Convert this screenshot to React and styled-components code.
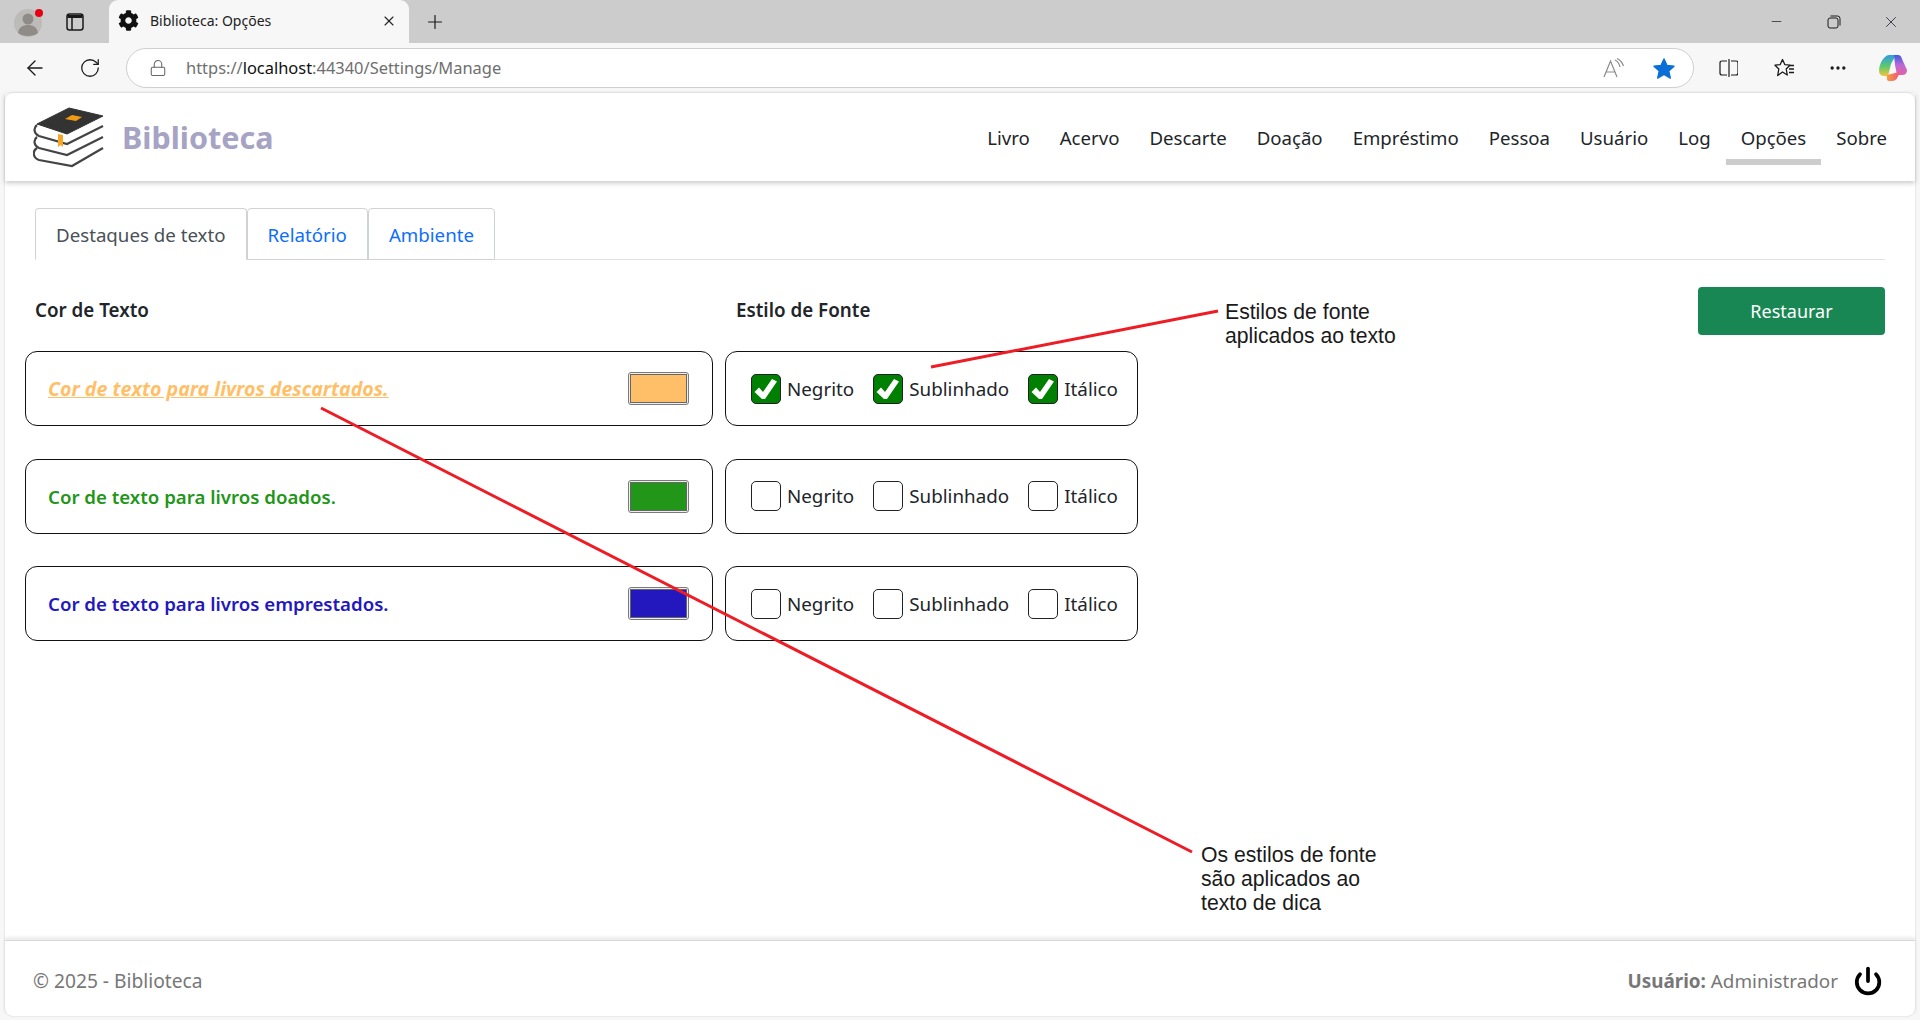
import React from 'react'
import styled, { createGlobalStyle } from 'styled-components'
import { FaCog } from 'react-icons/fa'
import { ArrowLeft, RotateCw, Lock, Plus, X, Minus, Power, MoreHorizontal } from 'lucide-react'

const Global = createGlobalStyle`
  html, body { margin: 0; padding: 0; height: 100%; background: #f7f7f7; }
  body { font-family: "Noto Sans", "Open Sans", sans-serif; color: #212529; overflow: hidden; }
  * { box-sizing: border-box; }
`

const Screen = styled.div`
  position: relative;
  width: 1920px;
  height: 1020px;
  display: flex;
  flex-direction: column;
  overflow: hidden;
`

/* browser chrome */
const TabStrip = styled.div`
  height: 43px;
  background: #cccccc;
  display: flex;
  align-items: flex-end;
  padding-left: 10px;
  flex-shrink: 0;
`
const StripIcon = styled.div`
  width: ${p => p.$w || 34}px;
  height: 43px;
  display: flex;
  align-items: center;
  justify-content: center;
  margin-left: ${p => p.$ml || 0}px;
  color: #1a1a1a;
  flex-shrink: 0;
`
const BrowserTab = styled.div`
  width: 300px;
  height: 43px;
  margin-left: 19px;
  background: #f7f7f7;
  border-radius: 9px 9px 0 0;
  display: flex;
  align-items: center;
  padding: 0 12px 2px 9px;
  font-size: 14px;
  color: #222;
  svg.gear { margin-right: 11px; }
  span { flex: 1; }
`
const WindowControls = styled.div`
  margin-left: auto;
  display: flex;
  padding-right: 1px;
`
const WinBtn = styled.div`
  width: 57px;
  height: 43px;
  display: flex;
  align-items: center;
  justify-content: center;
`
const Toolbar = styled.div`
  height: 50px;
  background: #f7f7f7;
  display: flex;
  align-items: center;
  padding-left: 7px;
  flex-shrink: 0;
`
const ToolBtn = styled.div`
  width: 55px;
  height: 40px;
  display: flex;
  align-items: center;
  justify-content: center;
  color: #1c1c1c;
  flex-shrink: 0;
`
const AddressBar = styled.div`
  flex: 1;
  height: 40px;
  margin: 0 6px 0 9px;
  background: #fff;
  border: 1px solid #cfcfcf;
  border-radius: 20px;
  display: flex;
  align-items: center;
  padding: 0 18px 0 22px;
  font-size: 16.45px;
  color: #6f6f6f;
`
const Url = styled.div`
  margin: 0 0 2px 19px;
  flex: 1;
  b { font-weight: 400; color: #111; }
`
const AddressGap = styled.span`
  width: 28px;
`

/* page */
const Page = styled.div`
  flex: 1;
  margin: 0 5px 4px;
  background: #fff;
  border-radius: 8px;
  display: flex;
  flex-direction: column;
  box-shadow: 0 0 2px rgba(0,0,0,.2);
  min-height: 0;
`
const Header = styled.header`
  height: 88px;
  display: flex;
  align-items: center;
  padding: 0 13px 0 28px;
  box-shadow: 0 2px 5px rgba(0,0,0,.22);
  flex-shrink: 0;
`
const Brand = styled.div`
  display: flex;
  align-items: center;
  gap: 14px;
  font-size: 30.5px;
  font-weight: 700;
  color: #a6a3c4;
`
const Nav = styled.nav`
  margin-left: auto;
  display: flex;
`
const NavItem = styled.a`
  padding: 16px 15px 8px;
  line-height: 26px;
  font-size: 18.62px;
  color: #212529;
  border-bottom: 6px solid ${p => (p.$active ? '#cccccc' : 'transparent')};
`
const Main = styled.main`
  flex: 1;
  padding: 27px 30px 0 20px;
  min-height: 0;
`
const Tabs = styled.div`
  display: flex;
  margin-left: 10px;
  height: 52px;
  border-bottom: 1px solid #dee2e6;
`
const Tab = styled.a`
  padding: 1px 20px 0;
  display: flex;
  align-items: center;
  font-size: 18.7px;
  height: 52px;
  color: ${p => (p.$active ? '#495057' : '#0d6efd')};
  border: 1px solid #d0d3d6;
  border-bottom: ${p => (p.$active ? '1px solid #fff' : '1px solid #d0d3d6')};
  border-radius: 4px 4px 0 0;
  background: #fff;
`
const TitleRow = styled.div`
  display: flex;
  align-items: center;
  height: 48px;
  margin-top: 27px;
`
const ColTitle = styled.div`
  font-size: 18.8px;
  font-weight: 600;
  padding: 0 0 2px 10px;
  width: ${p => p.$w}px;
  color: #212529;
`
const RestoreBtn = styled.button`
  margin-left: auto;
  width: 187px;
  height: 48px;
  border: 0;
  border-radius: 4px;
  background: #198754;
  color: #fff;
  font: inherit;
  font-size: 18px;
  padding-top: 1px;
`
const Rows = styled.div`
  display: flex;
  flex-direction: column;
  gap: 32.5px;
  margin-top: 16px;
`
const Row = styled.div`
  display: flex;
  gap: 12px;
`
const Card = styled.div`
  height: 75px;
  border: 1px solid #111;
  border-radius: 12px;
  display: flex;
  align-items: center;
`
const ColorCard = styled(Card)`
  width: 688px;
  padding: 0 23px 0 22px;
  justify-content: space-between;
`
const StyleCard = styled(Card)`
  width: 413px;
  padding: 0 19px 0 25px;
  justify-content: space-between;
`
const Sample = styled.div`
  font-size: ${p => (p.$styled ? 19.6 : 18.65)}px;
  font-weight: ${p => (p.$styled ? 700 : 600)};
  font-style: ${p => (p.$styled ? 'italic' : 'normal')};
  text-decoration: ${p => (p.$styled ? 'underline' : 'none')};
  color: ${p => p.$color};
`
const Swatch = styled.input`
  width: 61px;
  height: 33px;
  flex-shrink: 0;
  padding: 1px;
  border: 1px solid #7a7a7a;
  border-radius: 3px;
  background: #efefef;
  &::-webkit-color-swatch-wrapper { padding: 0; }
  &::-webkit-color-swatch { border: 1px solid #666; border-radius: 0; }
`
const Check = styled.label`
  display: flex;
  align-items: center;
  gap: 6px;
  font-size: 18.8px;
  color: #212529;
`
const Box = styled.span`
  width: 30px;
  height: 30px;
  border: 1px solid #222;
  border-radius: 5px;
  background: ${p => (p.$on ? '#008000' : '#fff')};
  display: flex;
  align-items: center;
  justify-content: center;
`
const Footer = styled.footer`
  height: 76px;
  border-top: 1px solid #d8d8d8;
  box-shadow: 0 -3px 3px rgba(0,0,0,.08);
  display: flex;
  align-items: center;
  justify-content: space-between;
  padding: 4px 32px 0 28px;
  font-size: 19.2px;
  color: #777;
  flex-shrink: 0;
`
const UserInfo = styled.div`
  display: flex;
  align-items: center;
  gap: 15px;
  font-size: 18.85px;
  b { font-weight: 700; }
  svg { color: #000; }
`

/* annotations lying over the page */
const Overlay = styled.svg`
  position: absolute;
  left: 0;
  top: 0;
  pointer-events: none;
`
const Note = styled.div`
  position: absolute;
  left: ${p => p.$x}px;
  top: ${p => p.$y}px;
  font-family: "Liberation Sans", Arial, sans-serif;
  font-size: 21.2px;
  line-height: 24px;
  color: #1a1a1a;
  white-space: pre-line;
`

const BookLogo = () => (
  <svg width="75" height="65" viewBox="13 10 75 65" fill="none">
    <path d="M17 29 L49 13 L83 21 L47 39 Z" fill="#333" stroke="#333" strokeLinejoin="round" />
    <path d="M17 30 C13 33 14 39 19 41 L47 49 L83 31" stroke="#444" strokeWidth="2.2" />
    <path d="M17 42 C13 45 14 51 19 53 L47 60 L83 42" stroke="#444" strokeWidth="2.2" />
    <path d="M17 53 C12 56 13 63 19 65 L52 71 L83 53" stroke="#444" strokeWidth="2.2" />
    <path d="M45 24 L52 20 L62 22 L56 26 Z" fill="#f39c12" />
    <path d="M38 39 L43 40 L43 52 L40.5 50 L38 52 Z" fill="#f5a623" />
  </svg>
)

const Avatar = () => (
  <svg width="34" height="34" viewBox="0 0 34 34">
    <circle cx="18" cy="18" r="14" fill="#bdbbb8" />
    <circle cx="18" cy="14" r="5.5" fill="#8f8c88" />
    <path d="M8 28 C9 22 13 20 18 20 C23 20 27 22 28 28 C24 32 12 32 8 28 Z" fill="#8f8c88" />
    <circle cx="29" cy="8" r="4" fill="#e60012" />
  </svg>
)

const TabsPanel = () => (
  <svg width="18" height="18" viewBox="0 0 18 18" fill="none" stroke="#1a1a1a" strokeWidth="1.5">
    <rect x="1" y="1" width="16" height="16" rx="2.5" />
    <path d="M1.5 3.5 H16.5" strokeWidth="3" />
    <path d="M6 3 V17" />
  </svg>
)

const Restore = () => (
  <svg width="14" height="14" viewBox="0 0 14 14" fill="none" stroke="#1a1a1a" strokeWidth="1">
    <rect x="1" y="3" width="10" height="10" rx="2" />
    <path d="M3.5 1 H10.5 Q13 1 13 3.5 V10.5" />
  </svg>
)

const ReadAloud = () => (
  <svg width="22" height="20" viewBox="0 0 22 20" fill="none" stroke="#8a8a8a" strokeWidth="1.2">
    <path d="M1 19 L7.5 3 L14 19 M3.5 14 H11.5" />
    <path d="M12 2 Q16 4 17 9 M14 0.5 Q19 3 20.5 8" />
  </svg>
)

const Star = () => (
  <svg width="22" height="21" viewBox="0 0 24 23">
    <path d="M12 1 L15.3 8.2 L23 9 L17.2 14.2 L18.9 22 L12 18 L5.1 22 L6.8 14.2 L1 9 L8.7 8.2 Z" fill="#0a6fd6" stroke="#0a6fd6" strokeWidth="1.5" strokeLinejoin="round" />
  </svg>
)

const SplitScreen = () => (
  <svg width="20" height="20" viewBox="-1 0 20 20" fill="none" stroke="#1a1a1a" strokeWidth="1.2">
    <path d="M8 3 H3 Q1 3 1 5 V15 Q1 17 3 17 H8 M12 3 H17 Q19 3 19 5 V15 Q19 17 17 17 H12 M10 1 V19" />
  </svg>
)

const Favorites = () => (
  <svg width="22" height="20" viewBox="-2 0 22 20" fill="none" stroke="#1a1a1a" strokeWidth="1.3">
    <path d="M8.5 1.5 L10.8 6.6 L16 7.2 L12.2 11 L13.3 17 L8.5 14 L3.7 17.5 L4.8 11 L1 7.2 L6.2 6.6 Z" strokeLinejoin="round" />
    <path d="M16 7.5 H21 M15 11 H21 M15 14.5 H21" />
  </svg>
)

const Copilot = () => (
  <svg width="30" height="30" viewBox="0 0 30 30">
    <defs>
      <linearGradient id="cpA" x1="0" y1="0" x2="0" y2="1">
        <stop offset="0" stopColor="#2f9be8" />
        <stop offset=".55" stopColor="#5fc96b" />
        <stop offset="1" stopColor="#f2c53d" />
      </linearGradient>
      <linearGradient id="cpB" x1="0" y1="0" x2="0" y2="1">
        <stop offset="0" stopColor="#3a5be0" />
        <stop offset=".5" stopColor="#b96ad8" />
        <stop offset="1" stopColor="#e85fa0" />
      </linearGradient>
      <linearGradient id="cpC" x1="0" y1="0" x2="1" y2="0">
        <stop offset="0" stopColor="#f7a13a" />
        <stop offset="1" stopColor="#f0567a" />
      </linearGradient>
    </defs>
    <path d="M11 2 H18 L13 11 L10 23 H6 Q1 23 1 17 Q2 8 7 4 Q9 2 11 2 Z" fill="url(#cpA)" />
    <path d="M16 2 H20 Q23 2 24 6 L29 17 Q29 22 24 22 H19 L17 12 Z" fill="url(#cpB)" />
    <path d="M9 22 L21 19 Q20 28 14 28 H11 Q8 28 9 22 Z" fill="url(#cpC)" />
  </svg>
)

const Tick = () => (
  <svg width="28" height="28" viewBox="1 1 28 28">
    <path d="M3.5 18 L8 13.5 L12 18 L21 5 L26 7.5 L14 25 L11 25 Z" fill="#fff" />
  </svg>
)

const navItems = ['Livro', 'Acervo', 'Descarte', 'Doação', 'Empréstimo', 'Pessoa', 'Usuário', 'Log', 'Opções', 'Sobre']

const rows = [
  { text: 'Cor de texto para livros descartados.', color: '#ffbf69', on: true },
  { text: 'Cor de texto para livros doados.', color: '#229619', on: false },
  { text: 'Cor de texto para livros emprestados.', color: '#2318be', on: false },
]

function App() {
  return (
    <Screen>
      <Global />
      <TabStrip>
        <StripIcon><Avatar /></StripIcon>
        <StripIcon $w={30} $ml={16}><TabsPanel /></StripIcon>
        <BrowserTab>
          <FaCog className="gear" size={21} color="#111" />
          <span>Biblioteca: Opções</span>
          <X size={16} strokeWidth={1.6} />
        </BrowserTab>
        <StripIcon $w={34} $ml={9}><Plus size={22} strokeWidth={1.3} /></StripIcon>
        <WindowControls>
          <WinBtn><Minus size={15} strokeWidth={1.2} /></WinBtn>
          <WinBtn><Restore /></WinBtn>
          <WinBtn><X size={18} strokeWidth={1.1} /></WinBtn>
        </WindowControls>
      </TabStrip>
      <Toolbar>
        <ToolBtn><ArrowLeft size={24} strokeWidth={1.4} /></ToolBtn>
        <ToolBtn><RotateCw size={22} strokeWidth={1.4} /></ToolBtn>
        <AddressBar>
          <Lock size={18} strokeWidth={1.4} color="#666" />
          <Url>https://<b>localhost</b>:44340/Settings/Manage</Url>
          <ReadAloud />
          <AddressGap />
          <Star />
        </AddressBar>
        <ToolBtn><SplitScreen /></ToolBtn>
        <ToolBtn><Favorites /></ToolBtn>
        <ToolBtn><MoreHorizontal size={20} strokeWidth={2} /></ToolBtn>
        <ToolBtn><Copilot /></ToolBtn>
      </Toolbar>
      <Page>
        <Header>
          <Brand><BookLogo />Biblioteca</Brand>
          <Nav>
            {navItems.map(n => <NavItem key={n} $active={n === 'Opções'}>{n}</NavItem>)}
          </Nav>
        </Header>
        <Main>
          <Tabs>
            <Tab $active>Destaques de texto</Tab>
            <Tab>Relatório</Tab>
            <Tab>Ambiente</Tab>
          </Tabs>
          <TitleRow>
            <ColTitle $w={701}>Cor de Texto</ColTitle>
            <ColTitle>Estilo de Fonte</ColTitle>
            <RestoreBtn>Restaurar</RestoreBtn>
          </TitleRow>
          <Rows>
            {rows.map(r => (
              <Row key={r.text}>
                <ColorCard>
                  <Sample $color={r.color} $styled={r.on}>{r.text}</Sample>
                  <Swatch type="color" defaultValue={r.color} />
                </ColorCard>
                <StyleCard>
                  {['Negrito', 'Sublinhado', 'Itálico'].map(l => (
                    <Check key={l}><Box $on={r.on}>{r.on && <Tick />}</Box>{l}</Check>
                  ))}
                </StyleCard>
              </Row>
            ))}
          </Rows>
        </Main>
        <Footer>
          <span>© 2025 - Biblioteca</span>
          <UserInfo>
            <span><b>Usuário:</b> Administrador</span>
            <Power size={30} strokeWidth={3} />
          </UserInfo>
        </Footer>
      </Page>
      <Overlay width="1920" height="1020">
        <line x1="931" y1="367" x2="1218" y2="311" stroke="#ee1c25" strokeWidth="3" />
        <line x1="321" y1="408" x2="1192" y2="852" stroke="#ee1c25" strokeWidth="3" />
      </Overlay>
      <Note $x={1225} $y={300}>{'Estilos de fonte\naplicados ao texto'}</Note>
      <Note $x={1201} $y={843}>{'Os estilos de fonte\nsão aplicados ao\ntexto de dica'}</Note>
    </Screen>
  )
}

export default App
